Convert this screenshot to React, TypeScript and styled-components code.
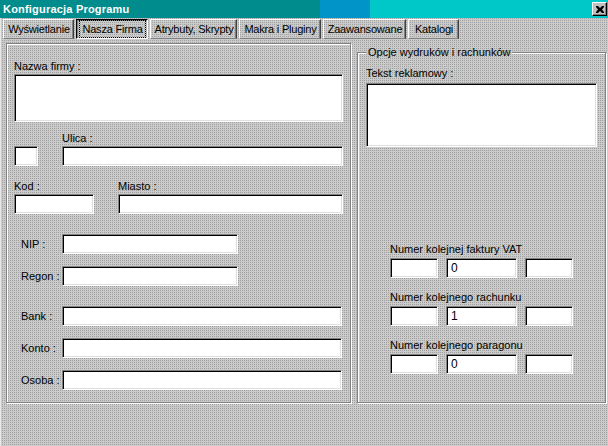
import React from "react";
import styled, { createGlobalStyle } from "styled-components";

const dither = `
  background-color: #a0a0a0;
  background-image:
    linear-gradient(to right, transparent 1px, #cbcbcb 1px),
    linear-gradient(to bottom, transparent 1px, #cbcbcb 1px);
  background-size: 2px 2px;
  background-attachment: fixed;
`;

const GlobalStyle = createGlobalStyle`
  html, body {
    margin: 0;
    padding: 0;
  }
  body {
    ${dither}
    font-family: "Liberation Sans", Arial, sans-serif;
    font-size: 11px;
    color: #000;
  }
`;

const Window = styled.div`
  width: 608px;
  height: 446px;
  display: flex;
  flex-direction: column;
  box-shadow: inset 1px 0 #e8e8e8;
  overflow: hidden;
`;

const TitleBar = styled.div`
  height: 18px;
  display: flex;
  align-items: center;
  justify-content: space-between;
  padding: 0 1px 0 3px;
  background: linear-gradient(
    to right,
    #008c8c 0 320px,
    #0094c8 320px 370px,
    #00c8c8 370px
  );
  color: #fff;
  font-weight: bold;
  font-size: 11px;
  letter-spacing: 0.2px;
`;

const CloseButton = styled.button`
  width: 15px;
  height: 14px;
  padding: 0;
  display: flex;
  align-items: center;
  justify-content: center;
  background: #c0c0c0;
  border: 1px solid;
  border-color: #fff #000 #000 #fff;
  box-shadow: inset -1px -1px #808080;
`;

const TabStrip = styled.div`
  height: 21px;
  display: flex;
  gap: 2px;
  padding: 1px 0 0 3px;
  box-sizing: border-box;
`;

const Tab = styled.div<{ $active?: boolean; $w: number }>`
  width: ${(p) => p.$w}px;
  height: 20px;
  box-sizing: border-box;
  display: flex;
  align-items: center;
  justify-content: center;
  padding: 0 1px 0 2px;
  border: 1px solid;
  border-color: ${(p) =>
    p.$active ? "#000 #fff #fff #000" : "#fff #404040 #808080 #fff"};
  box-shadow: ${(p) =>
    p.$active ? "inset 1px 1px #808080" : "inset -1px 0 #808080"};
  white-space: nowrap;
  letter-spacing: -0.2px;
`;

const FocusText = styled.span<{ $active?: boolean }>`
  padding: 2px 2px;
  outline: ${(p) => (p.$active ? "1px dotted #000" : "none")};
`;

const Content = styled.div`
  display: flex;
  gap: 6px;
  padding: 4px 2px 0 6px;
`;

const LeftPanel = styled.div`
  width: 345px;
  height: 360px;
  box-sizing: border-box;
  border: 1px solid #808080;
  box-shadow: inset 1px 1px #fff, 1px 1px #fff;
  padding: 16px 7px 0 7px;
  display: flex;
  flex-direction: column;
`;

const Label = styled.div`
  line-height: 13px;
  height: 13px;
  margin-bottom: 1px;
  white-space: nowrap;
`;

const Field = styled.div<{ $w?: number; $h?: number }>`
  width: ${(p) => (p.$w ? `${p.$w}px` : "100%")};
  height: ${(p) => p.$h ?? 20}px;
  box-sizing: border-box;
  background: #fff;
  border: 1px solid;
  border-color: #808080 #fff #fff #808080;
  box-shadow: inset 1px 1px #000, inset -1px -1px #dfdfdf;
  padding: 2px 0 0 4px;
  line-height: 14px;
  font-size: 12px;
`;

const AddressGrid = styled.div<{ $first: number; $top: number }>`
  display: grid;
  grid-template-columns: ${(p) => p.$first}px 1fr;
  column-gap: 24px;
  margin-top: ${(p) => p.$top}px;
  align-items: end;
`;

const FormRow = styled.div<{ $top: number }>`
  display: flex;
  align-items: center;
  margin-top: ${(p) => p.$top}px;
`;

const RowLabel = styled.div`
  width: 48px;
  box-sizing: border-box;
  padding-left: 7px;
  white-space: nowrap;
`;

const GroupBox = styled.fieldset`
  flex: 1;
  margin: 3px 0 0 0;
  min-width: 0;
  box-sizing: border-box;
  border: 1px solid #808080;
  box-shadow: inset 1px 1px #fff, 1px 1px #fff;
  padding: 8px 8px 0 8px;
  display: flex;
  flex-direction: column;
`;

const Legend = styled.legend`
  ${dither}
  padding: 0 2px;
  line-height: 13px;
  font-size: 11px;
`;

const TextArea = styled(Field)`
  margin-top: 2px;
`;

const NumberBlock = styled.div<{ $top: number }>`
  margin-top: ${(p) => p.$top}px;
  margin-left: 24px;
`;

const NumberLabel = styled.div`
  line-height: 13px;
  height: 13px;
  margin-bottom: 2px;
  white-space: nowrap;
`;

const NumberFields = styled.div`
  display: grid;
  grid-template-columns: 48px 71px 48px;
  column-gap: 8px;
`;

const tabs = [
  { label: "Wyświetlanie", w: 71 },
  { label: "Nasza Firma", w: 72 },
  { label: "Atrybuty, Skrypty", w: 87 },
  { label: "Makra i Pluginy", w: 82 },
  { label: "Zaawansowane", w: 83 },
  { label: "Katalogi", w: 51 },
];

const numbers = [
  { label: "Numer kolejnej faktury VAT", value: "0", top: 96 },
  { label: "Numer kolejnego rachunku", value: "1", top: 13 },
  { label: "Numer kolejnego paragonu", value: "0", top: 13 },
];

const rows = [
  { label: "NIP :", top: 20, w: 176 },
  { label: "Regon :", top: 12, w: 176 },
  { label: "Bank :", top: 20, w: 280 },
  { label: "Konto :", top: 12, w: 280 },
  { label: "Osoba :", top: 12, w: 280 },
];

export default function App() {
  return (
    <>
      <GlobalStyle />
      <Window>
        <TitleBar>
          <span>Konfiguracja Programu</span>
          <CloseButton aria-label="Zamknij">
            <svg width="8" height="7" viewBox="0 0 8 7">
              <path
                d="M0 0h2l2 2 2-2h2v1L6 3.5 8 6v1H6L4 5 2 7H0V6l2-2.5L0 1z"
                fill="#000"
              />
            </svg>
          </CloseButton>
        </TitleBar>
        <TabStrip>
          {tabs.map((t) => (
            <Tab key={t.label} $w={t.w} $active={t.label === "Nasza Firma"}>
              <FocusText $active={t.label === "Nasza Firma"}>{t.label}</FocusText>
            </Tab>
          ))}
        </TabStrip>
        <Content>
          <LeftPanel>
            <Label>Nazwa firmy :</Label>
            <Field $h={48} />
            <AddressGrid $first={24} $top={10}>
              <span />
              <Label>Ulica :</Label>
              <Field />
              <Field />
            </AddressGrid>
            <AddressGrid $first={80} $top={14}>
              <Label>Kod :</Label>
              <Label>Miasto :</Label>
              <Field />
              <Field />
            </AddressGrid>
            {rows.map((r) => (
              <FormRow key={r.label} $top={r.top}>
                <RowLabel>{r.label}</RowLabel>
                <Field $w={r.w} />
              </FormRow>
            ))}
          </LeftPanel>
          <GroupBox>
            <Legend>Opcje wydruków i rachunków</Legend>
            <Label>Tekst reklamowy :</Label>
            <TextArea $h={64} />
            {numbers.map((n) => (
              <NumberBlock key={n.label} $top={n.top}>
                <NumberLabel>{n.label}</NumberLabel>
                <NumberFields>
                  <Field />
                  <Field>{n.value}</Field>
                  <Field />
                </NumberFields>
              </NumberBlock>
            ))}
          </GroupBox>
        </Content>
      </Window>
    </>
  );
}
